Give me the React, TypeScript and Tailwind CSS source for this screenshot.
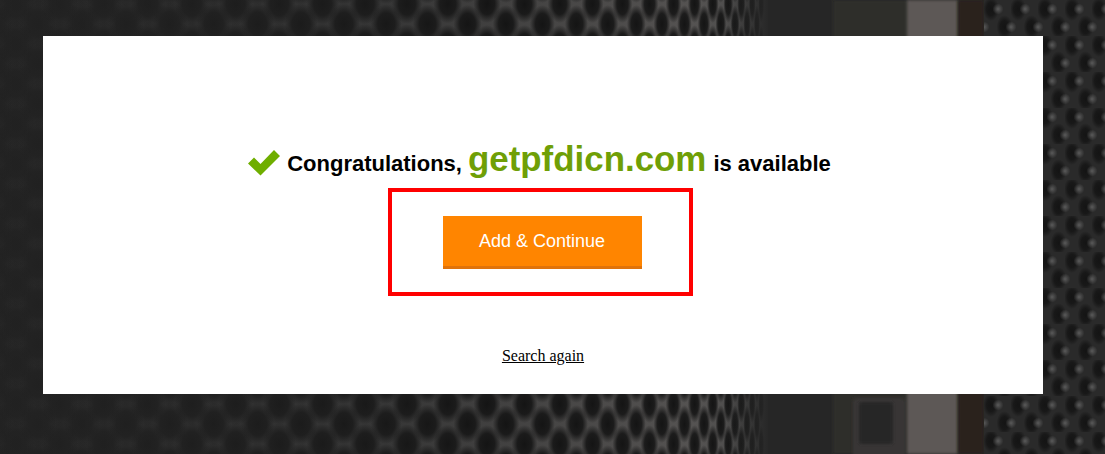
// Left part of the mesh recedes towards x=760, so its columns get tighter
const meshColumns: { x: number; rx: number; ry: number; depth: number; odd: boolean }[] = [];
let meshX = -6;
let meshOdd = false;
while (meshX < 765) {
  const step = Math.max(8, 44 - Math.pow(meshX / 760, 4) * 36);
  const depth = Math.min(1, Math.max(0, meshX / 480));
  meshColumns.push({ x: meshX, rx: step * (0.42 - depth * 0.06), ry: 24 - depth * 5, depth, odd: meshOdd });
  meshX += step / 2;
  meshOdd = !meshOdd;
}
const meshRows = Array.from({ length: 13 }, (_, i) => i * 40 - 16);

// Photo behind the card: perforated metal and a rack upright
function Backdrop() {
  return (
    <svg className="absolute inset-0 h-full w-full" viewBox="0 0 1105 454" preserveAspectRatio="none">
      <defs>
        <radialGradient id="hole">
          <stop offset="0" stopColor="#141414" stopOpacity="1" />
          <stop offset="0.55" stopColor="#161616" stopOpacity="0.9" />
          <stop offset="1" stopColor="#161616" stopOpacity="0" />
        </radialGradient>
        <radialGradient id="glint">
          <stop offset="0" stopColor="#5a5a5a" stopOpacity="1" />
          <stop offset="1" stopColor="#5a5a5a" stopOpacity="0" />
        </radialGradient>
        <pattern id="holes" x="984" y="0" width="27" height="36" patternUnits="userSpaceOnUse">
          <rect width="27" height="36" fill="#2a2a2a" />
          <ellipse cx="7" cy="9" rx="8" ry="12" fill="url(#hole)" />
          <ellipse cx="20.5" cy="27" rx="8" ry="12" fill="url(#hole)" />
          <circle cx="14" cy="9" r="5.5" fill="url(#glint)" />
          <circle cx="0" cy="27" r="5.5" fill="url(#glint)" />
          <circle cx="27" cy="27" r="5.5" fill="url(#glint)" />
        </pattern>
        <filter id="soft">
          <feGaussianBlur stdDeviation="1.8" />
        </filter>
        <linearGradient id="lattice" x1="0" x2="1" y1="0" y2="0">
          <stop offset="0" stopColor="#2a2a2a" />
          <stop offset="0.5" stopColor="#363636" />
          <stop offset="0.9" stopColor="#555352" />
          <stop offset="1" stopColor="#484848" />
        </linearGradient>
        <linearGradient id="meshEnd" x1="0" x2="1" y1="0" y2="0">
          <stop offset="0" stopColor="#262626" stopOpacity="0" />
          <stop offset="1" stopColor="#262626" stopOpacity="1" />
        </linearGradient>
      </defs>
      <rect width="1105" height="454" fill="#252525" />

      {/* receding mesh, hazier towards the left */}
      <rect width="770" height="454" fill="url(#lattice)" />
      {meshColumns.map((c) =>
        meshRows.map((y) => (
          <ellipse
            key={`${c.x}-${y}`}
            cx={c.x}
            cy={c.odd ? y + 20 : y}
            rx={c.rx}
            ry={c.ry}
            fill="url(#hole)"
            style={{ opacity: 0.4 + c.depth * 0.6 }}
          />
        )),
      )}
      <rect x="725" width="45" height="454" fill="url(#meshEnd)" />

      {/* rack upright and the light band beside it */}
      <rect x="768" width="66" height="454" fill="#262626" />
      <rect x="833" width="76" height="454" fill="#2e2d2c" filter="url(#soft)" />
      <rect x="853" y="398" width="52" height="60" rx="4" fill="#373635" filter="url(#soft)" />
      <rect x="859" y="402" width="34" height="42" rx="3" fill="#282828" filter="url(#soft)" />
      <rect x="907" width="51" height="454" fill="#5d5956" filter="url(#soft)" />
      <rect x="958" width="26" height="454" fill="#29231f" filter="url(#soft)" />

      {/* near mesh on the right */}
      <rect x="984" width="121" height="454" fill="url(#holes)" />
    </svg>
  );
}

export default function App() {
  return (
    <div className="relative h-[454px] w-[1105px] overflow-hidden bg-[#252525] font-['Liberation_Sans',sans-serif]">
      <Backdrop />
      <div className="relative pl-[43px] pt-9">
        <div className="flex h-[358px] w-[1000px] flex-col items-center bg-white pt-[97px]">
          {/* Availability line */}
          <div className="flex h-[55px] items-baseline pr-[7px] font-bold text-black">
            <svg className="mr-[7px] mt-[17px] h-[26px] w-8 self-start" viewBox="0 0 32 26">
              <polygon points="0,13.5 6,7.5 12.5,14 26,0 32,6 12.5,25.5" fill="#6fae00" />
            </svg>
            <span className="text-[22px]">Congratulations,</span>
            <span className="ml-[6px] mr-[7px] text-[34.9px] text-[#6f9f06]">getpfdicn.com</span>
            <span className="text-[22px]">is available</span>
          </div>

          {/* Highlighted button */}
          <div className="mr-[6px] flex h-[108px] w-[305px] items-center justify-center border-4 border-[#ff0000]">
            <button className="ml-1 h-[53px] w-[199px] border-b-[3px] border-[#e0730a] bg-[#ff8500] text-lg text-white">
              Add &amp; Continue
            </button>
          </div>

          <a href="#" className="mt-[48px] font-['Liberation_Serif',serif] text-base text-black underline">
            Search again
          </a>
        </div>
      </div>
    </div>
  );
}
